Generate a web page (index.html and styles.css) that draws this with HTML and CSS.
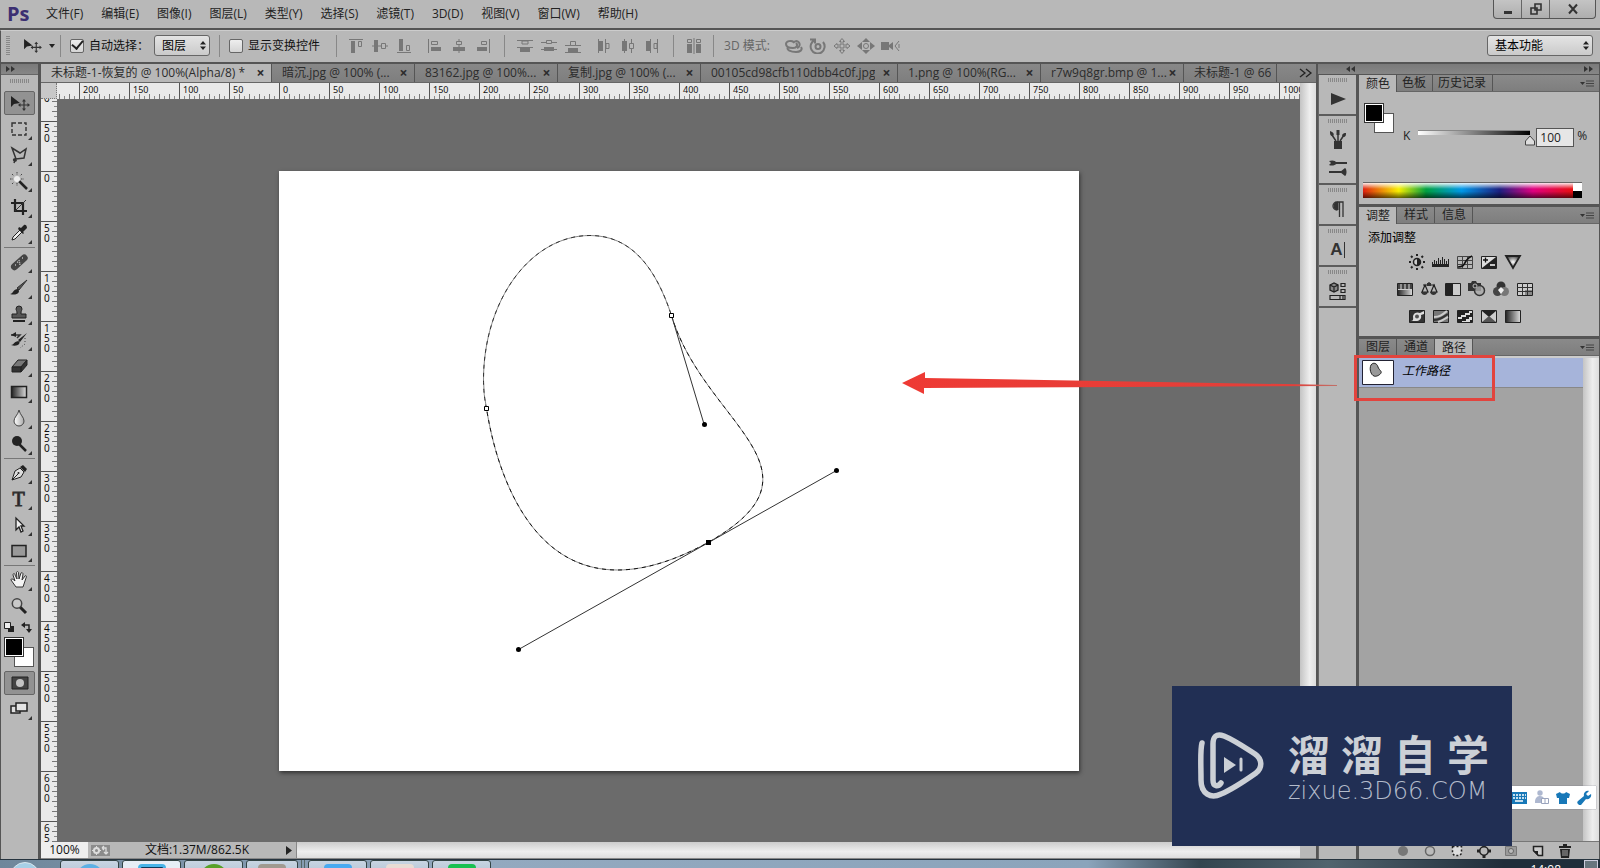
FILE: index.html
```html
<!DOCTYPE html>
<html lang="zh-CN">
<head>
<meta charset="utf-8">
<title>未标题-1-恢复的 @ 100%(Alpha/8)</title>
<link rel="stylesheet" href="styles.css">
</head>
<body>
<svg class="defs" aria-hidden="true">
  <defs>
    <linearGradient id="gDark" x1="0" x2="1"><stop offset="0" stop-color="#222"/><stop offset="1" stop-color="#ddd"/></linearGradient>
    <linearGradient id="gDrop" x1="0" x2="1"><stop offset="0" stop-color="#fff"/><stop offset="1" stop-color="#aaa"/></linearGradient>
    <linearGradient id="gDiag" x1="0" y1="0" x2="1" y2="1"><stop offset="0" stop-color="#222"/><stop offset=".4" stop-color="#ccc"/><stop offset=".6" stop-color="#333"/><stop offset="1" stop-color="#ddd"/></linearGradient>
    <radialGradient id="gVib"><stop offset="0" stop-color="#fff"/><stop offset="1" stop-color="#555"/></radialGradient>
    <linearGradient id="gArrow" x1="0" x2="1"><stop offset="0" stop-color="#ee3a34"/><stop offset=".9" stop-color="#e2403a"/><stop offset="1" stop-color="#c07068"/></linearGradient>
    <symbol id="i-move" viewBox="0 0 20 16"><path d="M1 1v11l3-3 6-1z" fill="#222"/><path d="M14 5v10M9 10h10" stroke="#333" stroke-width="1.2"/><path d="M12 6.500l2-2.500 2 2.500zM12 13.500l2 2.500 2-2.500zM10.500 8L8 10l2.500 2zM17.500 8l2.500 2-2.500 2z" fill="#333"/></symbol>
    <symbol id="i-menu" viewBox="0 0 14 8"><path d="M0 2h5L2.500 5z" fill="#333"/><path d="M6 1h8M6 3.500h8M6 6h8" stroke="#444"/></symbol>
    <symbol id="i-updown" viewBox="0 0 6 9"><path d="M0 3.500L3 0l3 3.500zM0 5.500L3 9l3-3.500z" fill="#222"/></symbol>
  </defs>
</svg>

<header class="menubar">
  <div class="logo">Ps</div>
  <nav class="menus">
    <button>文件(F)</button><button>编辑(E)</button><button>图像(I)</button><button>图层(L)</button><button>类型(Y)</button><button>选择(S)</button><button>滤镜(T)</button><button>3D(D)</button><button>视图(V)</button><button>窗口(W)</button><button>帮助(H)</button>
  </nav>
  <div class="winbtns">
    <button aria-label="最小化"><svg width="10" height="12"><path d="M1 8h8v3H1z" fill="#333"/></svg></button>
    <button aria-label="还原"><svg width="12" height="12"><path d="M5 1h6v6H5zM1 5h6v6H1z" fill="#b8b8b8" stroke="#333" stroke-width="1.600"/></svg></button>
    <button aria-label="关闭" class="win-close"><svg width="12" height="12"><path d="M2 1.500l8 9M10 1.500l-8 9" stroke="#333" stroke-width="2"/></svg></button>
  </div>
</header>

<section class="options">
  <span class="vgrip"></span>
  <svg class="opt-move" width="19" height="15"><use href="#i-move"/></svg>
  <svg class="opt-caret" width="6" height="4"><path d="M0 0h6L3 4z" fill="#222"/></svg>
  <i class="sep"></i>
  <label class="check"><input type="checkbox" checked><span>自动选择：</span></label>
  <span class="selectbox sel-layer"><select aria-label="自动选择"><option>图层</option></select><svg width="6" height="9"><use href="#i-updown"/></svg></span>
  <i class="sep"></i>
  <label class="check"><input type="checkbox"><span>显示变换控件</span></label>
  <i class="sep sep-far"></i>
  <div class="icons3">
    <svg width="16" height="14" class="al"><path d="M1 .500h14"/><path class="f" d="M3 2h4v12H3z"/><path d="M10.500 2.500h3v5h-3z"/></svg>
    <svg width="16" height="14" class="al"><path d="M0 7h16"/><path class="f" d="M2 1h4v12H2z"/><path class="o" d="M9.500 4.500h4v5h-4z"/></svg>
    <svg width="16" height="14" class="al"><path d="M1 13.500h14"/><path class="f" d="M3 0h4v12H3z"/><path d="M10.500 6.500h3v5h-3z"/></svg>
  </div>
  <div class="icons3">
    <svg width="16" height="14" class="al"><path d="M1.500 0v14"/><path class="f" d="M4 8h10v4H4z"/><path d="M4.500 2.500h6v3h-6z"/></svg>
    <svg width="16" height="14" class="al"><path d="M8 0v14"/><path class="f" d="M2 8h12v4H2z"/><path class="o" d="M5.500 2.500h5v3h-5z"/></svg>
    <svg width="16" height="14" class="al"><path d="M14.500 0v14"/><path class="f" d="M2 8h10v4H2z"/><path d="M6.500 2.500h5v3h-5z"/></svg>
  </div>
  <i class="sep"></i>
  <div class="icons3">
    <svg width="16" height="14" class="al"><path d="M0 1.500h16M0 8.500h16"/><path class="o" d="M5 2h6v3H5z"/><path class="f" d="M3 9h10v4H3z"/></svg>
    <svg width="16" height="14" class="al"><path d="M0 3.500h16M0 10.500h16"/><path class="o" d="M5.500 1.500h5v3h-5z"/><path class="f" d="M3 8h10v4H3z"/></svg>
    <svg width="16" height="14" class="al"><path d="M0 6.500h16M0 13.500h16"/><path class="o" d="M5.500 2.500h5v4h-5z"/><path class="f" d="M3 9h10v4H3z"/></svg>
  </div>
  <div class="icons3">
    <svg width="16" height="14" class="al"><path d="M2.500 0v14M9.500 0v14"/><path class="f" d="M3 2h4v10H3z"/><path d="M10 4.500h3v5h-3z"/></svg>
    <svg width="16" height="14" class="al"><path d="M4.500 0v14M11.500 0v14"/><path class="f" d="M2 2h5v10H2z"/><path class="o" d="M9.500 4.500h4v5h-4z"/></svg>
    <svg width="16" height="14" class="al"><path d="M6.500 0v14M13.500 0v14"/><path class="f" d="M2 2h4v10H2z"/><path d="M10 4.500h3v5h-3z"/></svg>
  </div>
  <i class="sep"></i>
  <svg width="16" height="16" class="al"><path d="M8 0v16"/><path d="M1.500 1.500h4v3h-4zM10.500 1.500h4v3h-4z"/><path class="f" d="M1 6h5v9H1zM10 6h5v9h-5z"/></svg>
  <i class="sep"></i>
  <span class="mode3d">3D 模式:</span>
  <div class="icons5">
    <svg width="18" height="16" class="al w"><path d="M8 5a3.500 3.500 0 1 1 4 5M9 4C6 2 1 3 1 6s4 4 7 4c4 0 5-3 3-5M3 9c-2 3 3 5 8 5 4 0 7-2 5-5"/></svg>
    <svg width="18" height="16" class="al w"><circle cx="9" cy="8.500" r="2.500"/><path d="M6 2a7 7 0 1 0 8 2M1 1.500h5v4"/></svg>
    <svg width="18" height="16" class="al"><path class="o" d="M9 .500l2.500 3H10V7h4V5.500L17 8l-3 2.500V9h-4v3.500h1.500L9 15.500l-2.500-3H8V9H4v1.500L1 8l3-2.500V7h4V3.500H6.500z"/></svg>
    <svg width="18" height="16" class="al"><circle cx="9" cy="8" r="2.500"/><path class="f" d="M9 0l4 4H5zM9 16l4-4H5zM0 8l5-4v8zM18 8l-5-4v8z"/></svg>
    <svg width="20" height="16" class="al"><path class="f" d="M0 4h8v8H0zM8 7l4-3v8L8 9z"/><path d="M18 3l-4 5 4 5M18 6v4"/></svg>
  </div>
  <span class="selectbox sel-work"><select aria-label="工作区"><option>基本功能</option></select><svg width="6" height="9"><use href="#i-updown"/></svg></span>
</section>

<main class="workspace">
  <aside class="toolbox">
    <div class="stripe"><svg width="9" height="6"><path d="M0 0l4 3-4 3zM5 0l4 3-4 3z" fill="#333"/></svg></div>
    <span class="hgrip"></span>
    <div class="tools">
      <button class="tool on" aria-label="移动工具"><svg width="20" height="16"><use href="#i-move"/></svg></button>
      <button class="tool sub" aria-label="矩形选框"><svg width="18" height="18"><path d="M2 3h14v12H2z" fill="none" stroke="#333" stroke-width="1.400" stroke-dasharray="4 2"/></svg></button>
      <button class="tool sub" aria-label="套索"><svg width="18" height="18"><path d="M2 2l8 5 6-4-2 9-8 1zM6 13c-3-1-3 2-1 2 2 0 1-2 0-1l-1 3" fill="none" stroke="#333" stroke-width="1.500"/></svg></button>
      <button class="tool sub" aria-label="魔棒"><svg width="18" height="18"><path d="M9 9l8 8" stroke="#222" stroke-width="2.500"/><circle cx="7" cy="7" r="3" fill="#eee"/><path d="M7 0v3M7 11v3M0 7h3M11 7h3M2 2l2 2M12 2l-2 2M2 12l2-2" stroke="#444" stroke-dasharray="1.500 1"/></svg></button>
      <button class="tool sub" aria-label="裁剪"><svg width="18" height="18"><path d="M5 1v12h12M1 5h12v12" fill="none" stroke="#222" stroke-width="2.200"/><path d="M5 13L16 2" stroke="#333"/></svg></button>
      <button class="tool sub" aria-label="吸管"><svg width="18" height="18"><path d="M2 16l1-3 7-7 2 2-7 7z" fill="#eee" stroke="#222"/><path d="M8 5l5 5 1-1-1-1 4-4c0-3-2-4-3-3l-3 3-2-1z" fill="#222"/></svg></button>
      <hr>
      <button class="tool sub" aria-label="修复画笔"><svg width="18" height="18"><rect x="-1" y="6" width="20" height="7" rx="3.500" transform="rotate(-42 9 9)" fill="#444"/><path d="M7 9l4 1M9 7l1 5M5 12h1M12 5h1" stroke="#bbb" stroke-width="1.500" stroke-dasharray="1 1"/></svg></button>
      <button class="tool sub" aria-label="画笔"><svg width="18" height="18"><path d="M17 1L9 11 7 9z" fill="#555" stroke="#333"/><path d="M8 10c3 3-1 7-8 5 3 0 3-5 8-5z" fill="#222"/></svg></button>
      <button class="tool sub" aria-label="仿制图章"><svg width="18" height="18"><path d="M7 8c0-2-1-3-1-4a3 3 0 0 1 6 0c0 1-1 2-1 4v1h5v4H2V9h5z" fill="#555" stroke="#222"/><path d="M3 16h12" stroke="#222" stroke-width="2"/></svg></button>
      <button class="tool sub" aria-label="历史记录画笔"><svg width="18" height="18"><path d="M1 4h9l-3 3" fill="none" stroke="#333" stroke-width="1.500"/><path d="M1 4l5-3v5z" fill="#222"/><path d="M17 2l-7 9-2-2zM9 10c2 3-2 6-8 4 3 0 3-4 8-4z" fill="#222"/><path d="M15 7v6l-5 4" fill="none" stroke="#444" stroke-dasharray="1 2"/></svg></button>
      <button class="tool sub" aria-label="橡皮擦"><svg width="18" height="18"><path d="M8 3h9l-6 7H2z" fill="#777" stroke="#222"/><path d="M2 10h9v5H2zM11 10l6-7v5l-6 7z" fill="#333" stroke="#222"/></svg></button>
      <button class="tool sub" aria-label="渐变"><svg width="18" height="18"><path d="M1.500 3.500h15v11h-15z" fill="url(#gDark)" stroke="#222" stroke-width="1.500"/></svg></button>
      <button class="tool sub" aria-label="模糊"><svg width="18" height="18"><path d="M9 1c1 5 5 7 5 11a5 5 0 0 1-10 0c0-4 4-6 5-11z" fill="url(#gDrop)" stroke="#444"/></svg></button>
      <button class="tool sub" aria-label="减淡"><svg width="18" height="18"><circle cx="7" cy="6" r="5" fill="#222"/><path d="M9 9l7 7" stroke="#222" stroke-width="2.500"/></svg></button>
      <hr>
      <button class="tool sub" aria-label="钢笔"><svg width="18" height="18"><path d="M2 16l3-9 5-3 4 4-3 5z" fill="#ddd" stroke="#222"/><path d="M10 3l3-2 4 4-2 3z" fill="#222"/><path d="M2 16l6-6" stroke="#222"/><circle cx="8.500" cy="9" r="1" fill="#222"/></svg></button>
      <button class="tool sub glyph" aria-label="文字工具">T</button>
      <button class="tool sub" aria-label="直接选择"><svg width="18" height="18"><path d="M6 2v12l3-3 2 5 2-1-2-5h3z" fill="#eee" stroke="#222" stroke-width="1.300"/></svg></button>
      <button class="tool sub" aria-label="矩形"><svg width="18" height="18"><path d="M2 3.500h14v11H2z" fill="#999" stroke="#222" stroke-width="1.500"/></svg></button>
      <hr>
      <button class="tool sub" aria-label="抓手"><svg width="18" height="18"><path d="M6 16L1 9c0-2 2-1 4 1L3 4c0-2 2-2 2 0l2 4-.500-6c0-2 2-2 2 0L9 8l2-6c1-1 2 0 2 1l-1 6 3-4c1-1 2 0 1 2l-3 9z" fill="#f4f4f4" stroke="#333"/></svg></button>
      <button class="tool" aria-label="缩放"><svg width="18" height="18"><path d="M10 10l6 6" stroke="#222" stroke-width="3"/><circle cx="7" cy="6.500" r="4.700" fill="#c9c9c9" stroke="#444" stroke-width="1.500"/></svg></button>
    </div>
    <div class="miniswap">
      <svg width="11" height="11"><path d="M4 4h6v6H4z" fill="#222"/><path d="M.500.500h6v6h-6z" fill="#eee" stroke="#222"/></svg>
      <svg width="11" height="11"><path d="M2 3h6v6" fill="none" stroke="#222" stroke-width="1.500"/><path d="M0 3l4-3v6zM5 7h6l-3 4z" fill="#222"/></svg>
    </div>
    <div class="swatch"><i class="bg"></i><i class="fg"></i></div>
    <div class="tools">
      <button class="tool on" aria-label="快速蒙版"><svg width="18" height="14"><path d="M1 1h16v12H1z" fill="#444" stroke="#222"/><circle cx="9" cy="7" r="4" fill="#c4c4c4"/></svg></button>
      <button class="tool sub" aria-label="屏幕模式"><svg width="18" height="14"><path d="M1 4h9v7H1z" fill="#ddd" stroke="#222" stroke-width="1.500"/><path d="M6 1h11v8H6z" fill="#e4e4e4" stroke="#222" stroke-width="1.500"/></svg></button>
    </div>
  </aside>

  <section class="docs">
    <div class="tabs">
      <div class="tab active"><span>未标题-1-恢复的 @ 100%(Alpha/8) *</span><button aria-label="关闭">×</button></div>
      <div class="tab"><span>暗沉.jpg @ 100% (...</span><button aria-label="关闭">×</button></div>
      <div class="tab"><span>83162.jpg @ 100%...</span><button aria-label="关闭">×</button></div>
      <div class="tab"><span>复制.jpg @ 100% (...</span><button aria-label="关闭">×</button></div>
      <div class="tab wide"><span>00105cd98cfb110dbb4c0f.jpg</span><button aria-label="关闭">×</button></div>
      <div class="tab"><span>1.png @ 100%(RG...</span><button aria-label="关闭">×</button></div>
      <div class="tab"><span>r7w9q8gr.bmp @ 1...</span><button aria-label="关闭">×</button></div>
      <div class="tab last"><span>未标题-1 @ 66</span></div>
      <button class="more" aria-label="更多"><svg width="14" height="10"><path d="M1 1l5 4-5 4M7 1l5 4-5 4" fill="none" stroke="#222" stroke-width="1.300"/></svg></button>
    </div>
    <div class="docbody">
      <div class="frame">
        <div class="hrow"><i class="corner"></i><div class="hruler"><span>200</span><span>150</span><span>100</span><span>50</span><span>0</span><span>50</span><span>100</span><span>150</span><span>200</span><span>250</span><span>300</span><span>350</span><span>400</span><span>450</span><span>500</span><span>550</span><span>600</span><span>650</span><span>700</span><span>750</span><span>800</span><span>850</span><span>900</span><span>950</span><span>1000</span></div></div>
        <div class="vrow">
          <div class="vruler"><div class="vlabels"><span>100</span><span>50</span><span>0</span><span>50</span><span>100</span><span>150</span><span>200</span><span>250</span><span>300</span><span>350</span><span>400</span><span>450</span><span>500</span><span>550</span><span>600</span><span>650</span></div></div>
          <div class="stage">
            <svg class="paper" width="800" height="600" viewBox="0 0 800 600" role="img" aria-label="工作路径">
              <path d="M392.500 144.500C425 253 557 299 429 371.500C239 476 210 250 207.500 237.500Q204.500 224 204.500 209C204.500 129 252 64.500 311 64.500C351 64.500 376 94.500 392.500 144.500Z" fill="none" stroke="#888"/>
              <path d="M392.500 144.500C425 253 557 299 429 371.500C239 476 210 250 207.500 237.500" fill="none" stroke="#111" stroke-dasharray="4 4"/>
              <path d="M207.500 237.500Q204.500 224 204.500 209C204.500 129 252 64.500 311 64.500C351 64.500 376 94.500 392.500 144.500" fill="none" stroke="#333" stroke-dasharray="4 4"/>
              <path d="M392.500 144.500L425 253M239.500 478.500L557.500 299.500" stroke="#333" fill="none"/>
              <g fill="#000"><circle cx="425.500" cy="253.500" r="2.500"/><circle cx="557.500" cy="299.500" r="2.500"/><circle cx="239.500" cy="478.500" r="2.500"/><path d="M427 369h5v5h-5z"/></g>
              <g fill="#fff" stroke="#000"><path d="M390.500 142.500h4v4h-4zM205.500 235.500h4v4h-4z"/></g>
            </svg>
          </div>
        </div>
      </div>
      <div class="vscroll"></div>
    </div>
    <footer class="status">
      <input class="zoomlevel" aria-label="缩放比例" value="100%">
      <svg class="gears" width="19" height="11"><path d="M0 0h19v11H0z" fill="#8b8b8b"/><circle cx="5.500" cy="5.500" r="2.500" fill="none" stroke="#ddd" stroke-width="2"/><path d="M5.500 1v9M1 5.500h9" stroke="#ddd" stroke-dasharray="2 5"/><path d="M11 3h4v5M11 3l2-2M11 3l2 2M15 9l2-2M15 9l-2-2" fill="none" stroke="#ddd" stroke-width="1.300"/></svg>
      <span class="docsize">文档:1.37M/862.5K</span>
      <button aria-label="菜单"><svg width="6" height="9"><path d="M0 0l6 4.500L0 9z" fill="#222"/></svg></button>
      <i class="hscroll"></i><i class="grow"></i>
    </footer>
  </section>

  <section class="right">
    <div class="stripe wide-stripe"><svg width="9" height="6"><path d="M4 0L0 3l4 3zM9 0L5 3l4 3z" fill="#333"/></svg><svg width="9" height="6"><path d="M0 0l4 3-4 3zM5 0l4 3-4 3z" fill="#333"/></svg></div>
    <div class="rightcols">
      <div class="dock">
        <div class="dgroup"><span class="hgrip"></span><button aria-label="动作"><svg width="20" height="16"><path d="M3 2l15 6-15 6z" fill="#333"/></svg></button></div>
        <div class="dgroup"><span class="hgrip"></span><button aria-label="画笔"><svg width="20" height="20"><path d="M6 11h8v8H6z" fill="#333"/><path d="M8 11L4 5M10 11V3M12 11l4-6" stroke="#333" stroke-width="1.500"/><path d="M2 1c3 1 5 3 3 5-3 0-3-2-3-5zM8.500 0h3v5h-3zM18 3c-3 0-5 2-3 4 3 0 3-2 3-4z" fill="#333"/></svg></button><button aria-label="画笔预设"><svg width="20" height="18"><path d="M8 4h11M1 13h12" stroke="#333" stroke-width="2"/><path d="M1 2c3-1 6-1 8 2-2 3-6 3-8 2l2-2zM12 13l5-4c2 1 2 7 0 8z" fill="#333"/></svg></button></div>
        <div class="dgroup"><span class="hgrip"></span><button aria-label="段落"><svg width="20" height="18"><path d="M9 10a4 4 0 0 1 0-8h6v15M11.500 2v15" fill="none" stroke="#333" stroke-width="1.300"/><path d="M10 2v8a4 4 0 0 1 0-8z" fill="#333" stroke="#333"/></svg></button></div>
        <div class="dgroup"><span class="hgrip"></span><button aria-label="字符" class="charbtn">A<i></i></button></div>
        <div class="dgroup"><span class="hgrip"></span><button aria-label="3D"><svg width="20" height="20"><path d="M2 4l4-2 4 2v5l-4 2-4-2z" fill="#888" stroke="#222" stroke-width="1.300"/><path d="M2 4l4 2 4-2M6 6v5M13 2.500h4v3h-4zM13 8.500h4v3h-4zM2 14.500h15v4H2zM12 14.500v4M15 14.500v4" fill="none" stroke="#222" stroke-width="1.200"/></svg></button></div>
      </div>
      <div class="panels">
        <div class="ptabs tight"><button class="cur">颜色</button><button>色板</button><button>历史记录</button><svg width="14" height="8"><use href="#i-menu"/></svg></div>
        <div class="pbody color">
          <div class="crow">
            <div class="swatch"><i class="bg"></i><i class="fg"></i></div>
            <label for="kval">K</label>
            <div class="slider"><i></i><svg width="12" height="11"><path d="M6 1l4.500 5v4h-9V6z" fill="#ddd" stroke="#444"/></svg></div>
            <input id="kval" value="100"><span>%</span>
          </div>
          <div class="spectrum"><i class="hues"></i><i class="bw"></i></div>
        </div>
        <div class="ptabs"><button class="cur">调整</button><button>样式</button><button>信息</button><svg width="14" height="8"><use href="#i-menu"/></svg></div>
        <div class="pbody adjust">
          <div class="adjtitle">添加调整</div>
          <div class="arow">
            <svg width="18" height="16"><circle cx="9" cy="8" r="3.500" fill="#ccc" stroke="#222" stroke-width="1.500"/><path d="M9 4.500a3.500 3.500 0 0 1 0 7z" fill="#222"/><path d="M9 0v2M9 14v2M1 8h2M15 8h2M3 2l1.500 1.500M15 2l-1.500 1.500M3 14l1.500-1.500M15 14l-1.500-1.500" stroke="#222" stroke-width="2"/></svg>
            <svg width="18" height="16"><path d="M0 13V8h1v2h1V6h1v4h1V7h1v3h1V4h1v6h1V6h1v4h1V3h1v7h1V5h1v5h1V7h1v3h1V5h1v8z" fill="#222"/></svg>
            <svg width="18" height="16"><path d="M1.500 2.500h15v12h-15zM6.500 2v12M11.500 2v12M1 6.500h15M1 10.500h15" fill="none" stroke="#444"/><path d="M2 13c6 0 6-3 8-6s3-4 6-5" fill="none" stroke="#111" stroke-width="1.700"/></svg>
            <svg width="18" height="16"><path d="M1.500 2.500h15v12h-15z" fill="#ddd" stroke="#222"/><path d="M16 3v11H2z" fill="#222"/><path d="M3 6h5M5.500 3.500v5" stroke="#111" stroke-width="1.300"/><path d="M10 11h5" stroke="#fff" stroke-width="1.500"/></svg>
            <svg width="18" height="16"><path d="M2 2h14L9 14z" fill="url(#gVib)" stroke="#222" stroke-width="1.800"/></svg>
          </div>
          <div class="arow">
            <svg width="18" height="16"><path d="M1.500 2.500h15v12h-15z" fill="url(#gDark)" stroke="#222"/><path d="M2 3h14v5H2z" fill="#444"/><path d="M5 3v5M9 3v5M13 3v5" stroke="#aaa" stroke-width="1.500"/><path d="M2 8.500h14" stroke="#ccc"/></svg>
            <svg width="18" height="16"><path d="M9 1v3M3 4h12M5 4l-3 7h6zM14 4l-3 7h6z" fill="none" stroke="#222" stroke-width="1.200"/><path d="M1 11h7c-1 4-6 4-7 0zM10 11h7c-1 4-6 4-7 0zM7 2h4v3H7z" fill="#333"/></svg>
            <svg width="18" height="16"><path d="M1.500 2.500h15v12h-15z" fill="#ccc" stroke="#222"/><path d="M2 3h7v11H2z" fill="#222"/></svg>
            <svg width="18" height="16"><path d="M0 2h3l1-2h4l1 2h4v8H0z" fill="#333"/><circle cx="11.500" cy="9.500" r="5" fill="#aaa" fill-opacity=".8" stroke="#333" stroke-width="1.500"/><circle cx="7" cy="5" r="2" fill="none" stroke="#bbb"/></svg>
            <svg width="18" height="16"><circle cx="9" cy="5" r="4.500" fill="#333"/><circle cx="5.500" cy="10.500" r="4.500" fill="#444"/><circle cx="12.500" cy="10.500" r="4.500" fill="#777"/><path d="M9 6l3 3-3 4-3-4z" fill="#eee"/></svg>
            <svg width="18" height="16"><path d="M1.500 2.500h15v12h-15z" fill="#ccc" stroke="#222"/><path d="M9 9h7v5H9z" fill="#888"/><path d="M6.500 2v12M11.500 2v12M1 6.500h15M1 10.500h15" stroke="#333"/></svg>
          </div>
          <div class="arow">
            <svg width="18" height="16"><path d="M1.500 2.500h15v12h-15z" fill="#333" stroke="#222"/><path d="M3 13c3 0 2-3 2-5 1-4 5-4 7-3l4-2v3l-3 1c1 4-2 6-5 6z" fill="#ddd"/><circle cx="9" cy="8.500" r="2" fill="#555"/></svg>
            <svg width="18" height="16"><path d="M1.500 2.500h15v12h-15z" fill="#777" stroke="#222"/><path d="M2 9c6 0 8-2 13-6M6 14c4-1 6-3 10-5" fill="none" stroke="#ccc" stroke-width="2"/><path d="M2 12c6 0 9-3 14-6" fill="none" stroke="#333" stroke-width="2"/></svg>
            <svg width="18" height="16"><path d="M1.500 2.500h15v12h-15z" fill="#222" stroke="#222"/><path d="M2 9h3V7h4V5h4V3h3v2h-2v2h-4v2H6v2H2zM6 14v-1h4v-2h3V9h3v3h-2v2z" fill="#ddd"/></svg>
            <svg width="18" height="16"><path d="M1.500 2.500h15v12h-15z" fill="#ccc" stroke="#222"/><path d="M2 3h14L9 9z" fill="#222"/><path d="M2 14h14L9 8z" fill="#555"/></svg>
            <svg width="18" height="16"><path d="M1.500 2.500h15v12h-15z" fill="url(#gDark)" stroke="#222"/></svg>
          </div>
        </div>
        <div class="ptabs"><button>图层</button><button>通道</button><button class="cur">路径</button><svg width="14" height="8"><use href="#i-menu"/></svg></div>
        <div class="paths">
          <div class="plist">
            <div class="prow"><svg class="thumb" width="32" height="25"><path d="M.500.500h31v24H.500z" fill="#fff" stroke="#223"/><path d="M9 5c2-3 6-2 7 2 1 3 4 4 3 6-1 2-5 4-7 3-3-1-5-7-3-11z" fill="#999" stroke="#222"/></svg><span>工作路径</span></div>
          </div>
          <div class="vscroll"></div>
        </div>
        <div class="pfoot">
          <button aria-label="填充"><svg width="14" height="14"><circle cx="7" cy="7" r="5" fill="#777"/></svg></button>
          <button aria-label="描边"><svg width="14" height="14"><circle cx="7" cy="7" r="4.500" fill="#bbb" stroke="#666" stroke-width="1.500"/></svg></button>
          <button aria-label="选区"><svg width="14" height="14"><path d="M2.500 2.500h9v7l-2 2h-5l-2-2z" fill="#ddd" stroke="#222" stroke-width="1.500" stroke-dasharray="2 2"/></svg></button>
          <button aria-label="路径"><svg width="14" height="14"><circle cx="7" cy="7" r="4.200" fill="none" stroke="#222" stroke-width="1.500"/><path d="M5.500 0h3v3h-3zM5.500 11h3v3h-3zM0 5.500h3v3H0zM11 5.500h3v3h-3z" fill="#222"/></svg></button>
          <button aria-label="蒙版"><svg width="14" height="14"><path d="M1.500 2.500h11v9h-11z" fill="#999" stroke="#777"/><circle cx="7" cy="7" r="2.500" fill="#bbb" stroke="#666"/></svg></button>
          <button aria-label="新建"><svg width="14" height="14"><path d="M2.500 2.500h9v9h-4l-5-5z" fill="#ccc" stroke="#222" stroke-width="1.500"/><path d="M2 7h5v5z" fill="#222"/></svg></button>
          <button aria-label="删除"><svg width="14" height="14"><path d="M2 5h10l-1 9H3zM1 2h12v2H1zM5 0h4v2H5z" fill="#222"/><path d="M5 6v6M7 6v6M9 6v6" stroke="#aaa"/></svg></button>
        </div>
      </div>
    </div>
  </section>
</main>

<footer class="taskbar">
  <i class="orb"></i>
  <button aria-label="应用"><i class="c1"></i></button><button class="lit" aria-label="应用"><i class="c2"></i></button><button aria-label="应用"><i class="c3"></i></button><button class="short" aria-label="应用"><i class="c4"></i></button>
  <span class="split"></span>
  <button aria-label="应用"><i class="c5"></i></button><button aria-label="应用"><i class="c6"></i></button><button aria-label="应用"><i class="c7"></i></button>
  <span class="clock">14:08</span><i class="showdesk"></i>
</footer>

<svg class="arrow" width="436" height="22" aria-hidden="true"><path d="M0 11L23 0v6l412 7v1L22 16v6z" fill="url(#gArrow)"/></svg>
<div class="redbox"></div>

<div class="ime">
  <svg width="16" height="12"><path d="M0 0h16v12H0z" fill="#1878b8"/><path d="M2 3h13M2 6h13" stroke="#fff" stroke-width="1.500" stroke-dasharray="2 1"/><path d="M4 9h8" stroke="#fff" stroke-width="1.500"/></svg>
  <svg width="16" height="15"><circle cx="6" cy="3" r="2.700" fill="#aeb8d0"/><path d="M1 12c0-5 3-6 5-6s4 1 4 3v4H1z" fill="#aeb8d0"/><path d="M7.500 8.500h7v5h-7zM11 8v6" fill="#fff" stroke="#9aa4bd"/></svg>
  <svg width="14" height="14"><path d="M4 1c1 2 5 2 6 0l4 2-1 4h-2v6H3V7H1L0 3z" fill="#1878b8"/></svg>
  <svg width="15" height="15"><path d="M1 14c-1-1-1-2 0-3l6-5c-1-3 2-6 5-5l-3 3 2 2 3-2c1 3-2 6-5 5l-5 6c-1 1-2 0-3-1z" fill="#1878b8"/></svg>
</div>

<div class="brand">
  <svg width="66" height="68" viewBox="0 0 66 68"><g fill="none" stroke="#ccd0d6" stroke-linecap="round"><path d="M4 11C2 18 3 32 3 48c0 14 10 19 20 14 10-4 25-14 35-21 7-6 6-14-1-19C46 15 36 8 26 4 18 1 15 5 15 12v36c0 7 5 7 8 3" stroke-width="5.500"/><path d="M43 27v11" stroke-width="3"/></g><path d="M26 25l12 8-12 8z" fill="#ccd0d6"/></svg>
  <div class="brandtext"><div class="cn"><span>溜</span><span>溜</span><span>自</span><span>学</span></div><div class="en">zixue.3D66.COM</div></div>
</div>
</body>
</html>
```

FILE: styles.css
```css
* { box-sizing: border-box; }
html, body { height: 100%; }
body {
  margin: 0;
  display: flex;
  flex-direction: column;
  overflow: hidden;
  position: relative;
  background: #b8b8b8;
  color: #222;
  font: 12px/16px "Open Sans", "Noto Sans CJK SC", sans-serif;
}
button, input, select { font: inherit; color: inherit; margin: 0; }
button { border: 0; padding: 0; background: none; display: flex; align-items: center; justify-content: center; }
svg { display: block; flex: none; }
i { display: block; font-style: normal; }
.defs { position: absolute; width: 0; height: 0; }

/* menu bar */
.menubar { flex: none; height: 30px; display: flex; align-items: center; border-bottom: 2px solid #555; padding: 0 4px 0 7px; }
.logo { width: 39px; color: #3b2f72; font: bold 20px/26px "Open Sans", sans-serif; }
.menus { display: flex; gap: 18px; flex: 1; }
.winbtns { align-self: flex-start; display: flex; height: 19px; border: 1px solid #555; border-top: 0; border-radius: 0 0 4px 4px; background: linear-gradient(#c4c4c4, #aeaeae); }
.winbtns button { width: 28px; border-right: 1px solid #666; }
.winbtns .win-close { width: 45px; border-right: 0; }

/* options bar */
.options { flex: none; height: 34px; display: flex; align-items: center; padding: 0 7px 2px 5px; border-bottom: 2px solid #555; border-top: 1px solid #ccc; border-left: 1px solid #555; }
.vgrip { width: 4px; height: 20px; background: repeating-linear-gradient(#888 0 1px, transparent 1px 2px); }
.opt-move { margin-left: 13px; }
.opt-caret { margin: 0 5px 0 7px; }
.sep { width: 1px; height: 22px; background: #888; flex: none; margin: 0 9px 0 0; }
.check { display: flex; align-items: center; gap: 5px; color: #111; white-space: nowrap; }
.check input {
  appearance: none; width: 14px; height: 14px; border: 1px solid #666; border-radius: 2px;
  background: linear-gradient(#eee, #d4d4d4); display: grid; place-items: center;
}
.check input:checked::after { content: ""; width: 5px; height: 9px; border: solid #222; border-width: 0 2px 2px 0; transform: rotate(40deg); margin-top: -4px; }
.selectbox { position: relative; display: block; height: 21px; }
.selectbox select { appearance: none; width: 100%; height: 100%; padding: 0 7px; border: 1px solid #666; border-radius: 3px; background: linear-gradient(#e4e4e4, #cacaca); color: #000; line-height: 16px; }
.selectbox svg { position: absolute; right: 4px; top: 6px; }
.sel-layer { width: 56px; margin: 0 9px 0 5px; }
.sel-work { width: 106px; margin-left: auto; }
.sep-far { margin: 0 11px 0 16px; }
.icons3 { display: flex; gap: 8px; margin-right: 15px; }
.icons3 + .sep { margin: 0 12px 0 -2px; }
.al { fill: none; stroke: #777; }
.al .f { fill: #777; stroke: none; }
.al .o { fill: #b8b8b8; }
.al.w { stroke-width: 2; }
.al + .sep { margin: 0 10px 0 11px; }
.mode3d { color: #666; margin-right: 15px; white-space: nowrap; }
.icons5 { display: flex; gap: 6px; }

/* workspace */
.workspace { flex: 1; min-height: 0; display: flex; background: #555; }
.stripe { flex: none; height: 11px; background: linear-gradient(#7a7a7a, #868686); padding: 0 5px; display: flex; align-items: center; justify-content: space-between; }
.hgrip { display: block; flex: none; width: 20px; height: 4px; background: repeating-linear-gradient(90deg, #888 0 1px, transparent 1px 2px); }

.toolbox { flex: none; width: 37px; margin: 0 3px 0 1px; background: #b8b8b8; display: flex; flex-direction: column; }
.toolbox .stripe { border-bottom: 1px solid #666; }
.toolbox .hgrip { margin: 4px 0 7px 9px; }
.tools { display: flex; flex-direction: column; padding: 0 3px; }
.tool { position: relative; height: 26px; padding-right: 2px; }
.tool.on { height: 24px; margin: 1px 0; background: #929292; border: 1px solid #666; border-radius: 2px; padding-right: 0; }
.tool.sub::after { content: ""; position: absolute; right: 3px; bottom: 2px; border: 2px solid #333; border-left-color: transparent; border-top-color: transparent; }
.glyph { font: 20px/24px "Liberation Serif", serif; color: #222; -webkit-text-stroke: 1px #333; }
.tools hr { margin: 1px 0; width: 100%; height: 1px; border: 0; background: #777; }
.miniswap { display: flex; justify-content: space-between; padding: 3px 6px 4px 3px; }
.swatch { display: grid; grid-template-columns: 10px 10px 10px; grid-template-rows: 10px 10px 10px; flex: none; }
.swatch .fg { grid-area: 1 / 1 / 3 / 3; background: #000; border: 1px solid #333; box-shadow: inset 0 0 0 1px #fff; }
.swatch .bg { grid-area: 2 / 2 / 4 / 4; background: #fff; border: 1px solid #555; }
.toolbox .swatch { margin: 0 3px 3px; }

/* documents */
.docs { flex: 1; min-width: 0; display: flex; flex-direction: column; }
.tabs { flex: none; height: 19px; display: flex; background: linear-gradient(#888, #7e7e7e); border-bottom: 1px solid #666; overflow: hidden; }
.tab { flex: none; width: 143px; display: flex; align-items: center; justify-content: space-between; padding: 0 5px 0 10px; border-right: 1px solid #555; color: #2c2c2c; white-space: nowrap; overflow: hidden; }
.tab span { overflow: hidden; }
.tab.active { width: 231px; background: #b8b8b8; }
.tab.wide { width: 197px; }
.tab.last { width: 93px; padding-right: 0; }
.tab button { font-size: 14px; line-height: 14px; font-weight: bold; width: 11px; }
.more { flex: 1; justify-content: flex-end; padding-right: 3px; }
.docbody { flex: 1; min-height: 0; display: flex; }
.frame { flex: 1; min-width: 0; display: flex; flex-direction: column; }
.hrow { flex: none; display: flex; height: 16px; }
.corner { flex: none; width: 16px; background: #c8c8c8; border: dotted #777; border-width: 0 1px 1px 0; }
.hruler {
  flex: 1; min-width: 0; overflow: hidden; display: flex; padding-left: 22px;
  font: 9px/11px "Noto Sans", sans-serif; color: #111;
  background:
    repeating-linear-gradient(90deg, #555 0 1px, transparent 1px 50px) 22px 0 / 100% 16px,
    repeating-linear-gradient(90deg, #777 0 1px, transparent 1px 10px) 2px 11px / 100% 5px,
    repeating-linear-gradient(90deg, #888 0 1px, transparent 1px 5px) 2px 13px / 100% 3px,
    #e9e9e9;
  background-repeat: no-repeat;
}
.hruler span { flex: none; width: 50px; padding: 1px 0 0 4px; }
.vrow { flex: 1; min-height: 0; display: flex; }
.vruler {
  flex: none; width: 16px; overflow: hidden; font: 10px/10px "Noto Sans", sans-serif; color: #111;
  background:
    repeating-linear-gradient(#555 0 1px, transparent 1px 50px) 0 22px / 16px 100%,
    repeating-linear-gradient(#777 0 1px, transparent 1px 10px) 11px 2px / 5px 100%,
    repeating-linear-gradient(#888 0 1px, transparent 1px 5px) 13px 2px / 3px 100%,
    #e9e9e9;
  background-repeat: no-repeat;
}
.vlabels { display: flex; flex-direction: column; margin-top: -28px; }
.vlabels span { flex: none; height: 50px; width: 10px; padding: 2px 0 0 3px; word-break: break-all; }
.stage { flex: 1; min-width: 0; background: #6b6b6b; display: flex; align-items: center; justify-content: center; overflow: hidden; }
.paper { background: #fff; box-shadow: 1px 2px 4px #333; }
.vscroll { flex: none; width: 16px; background: linear-gradient(90deg, #c4c4c4, #eee 60%, #ddd); }
.status { flex: none; height: 17px; display: flex; align-items: center; background: #b8b8b8; color: #111; border-bottom: 1px solid #888; }
.zoomlevel { width: 47px; height: 16px; border: 0; background: #eee; text-align: center; padding: 0; border-radius: 0; }
.gears { margin: 0 0 0 3px; }
.docsize { width: 139px; text-align: right; white-space: nowrap; }
.status button { width: 48px; height: 16px; border-right: 1px solid #888; padding-left: 32px; }
.hscroll { flex: 1; height: 16px; background: linear-gradient(#ccc, #eee 60%, #ddd); }
.grow { width: 16px; }

/* right side */
.right { flex: none; width: 282px; margin-left: 2px; display: flex; flex-direction: column; border-right: 1px solid #555; }
.wide-stripe { padding: 0 6px 0 28px; border-bottom: 1px solid #555; }
.rightcols { flex: 1; min-height: 0; display: flex; gap: 3px; }
.dock { flex: none; width: 38px; background: #b8b8b8; border-left: 1px solid #666; }
.dgroup { display: flex; flex-direction: column; align-items: center; border-bottom: 2px solid #5c5c5c; padding: 3px 0 1px; }
.dgroup .hgrip { margin-bottom: 3px; }
.dgroup button { height: 28px; }
.charbtn { font: bold 17px/20px "Liberation Sans", sans-serif; color: #333; }
.charbtn i { width: 1px; height: 16px; background: #333; margin-left: 1px; }
.panels { flex: 1; min-width: 0; display: flex; flex-direction: column; }
.ptabs { flex: none; height: 17px; display: flex; background: linear-gradient(#8a8a8a, #7e7e7e); border-bottom: 1px solid #666; padding-right: 5px; }
.ptabs button { padding: 0 6px 0 7px; border-right: 1px solid #555; color: #222; line-height: 16px; }
.ptabs.tight button:not(.cur) { padding: 0 6px 0 5px; }
.ptabs .cur { background: #b8b8b8; height: 17px; }
.ptabs svg { margin: 5px 0 0 auto; }
.pbody { flex: none; background: #b8b8b8; margin-bottom: 3px; height: 112px; }
.crow { display: flex; padding: 11px 0 0 5px; height: 90px; align-items: flex-start; }
.crow label { margin: 25px 8px 0 9px; }
.slider { flex: none; width: 118px; padding-top: 27px; }
.slider i { width: 112px; height: 5px; border-top: 1px solid #888; background: linear-gradient(90deg, #fff, #000); }
.slider svg { margin-left: 106px; }
.crow input { width: 38px; height: 19px; margin: 25px 3px 0 0; border: 1px solid #555; background: #e6e6e6; padding: 0 3px; border-radius: 0; }
.crow > span { margin-top: 25px; }
.spectrum { display: flex; height: 16px; margin: 0 17px 0 4px; border-top: 1px solid #666; }
.hues { flex: 1; background: linear-gradient(rgba(255,255,255,.9), rgba(255,255,255,0) 40%, rgba(0,0,0,0) 55%, rgba(0,0,0,.6)), linear-gradient(90deg, #e02010, #f8f000 17%, #00a040 30%, #0098e8 47%, #1c2080 65%, #e00080 81%, #e81010); }
.bw { width: 9px; background: linear-gradient(#fff 50%, #000 50%); }
.adjtitle { padding: 6px 0 0 9px; color: #000; height: 29px; }
.arow { display: flex; justify-content: center; gap: 6px; height: 27px; padding: 1px 29px 0 0; }
.paths { flex: 1; min-height: 0; display: flex; border-top: 2px solid #ccc; }
.plist { flex: 1; background: #a3a3a3; }
.prow { display: flex; align-items: flex-start; gap: 8px; height: 30px; padding: 2px 3px; background: #a6b4da; border-bottom: 1px solid #888; color: #000; }
.prow span { font-style: italic; line-height: 21px; }
.pfoot { flex: none; height: 18px; display: flex; justify-content: flex-end; gap: 13px; padding-right: 27px; background: #b8b8b8; border-top: 1px solid #777; }

/* taskbar */
.taskbar { flex: none; height: 9px; overflow: hidden; display: flex; align-items: flex-start; gap: 3px; padding-left: 10px; border-top: 1px solid #26343f; background: linear-gradient(90deg, #6f879b, #93a9bf 30%, #8ba4bb 68%, #33454f 75%, #51646e 83%, #202d3a 94%); }
.orb { width: 30px; height: 30px; border-radius: 50%; background: #a7cfe6; border: 1px solid #d9e6ee; margin: 2px 17px 0 0; flex: none; }
.taskbar button { flex: none; width: 59px; height: 30px; align-items: flex-start; border: 1px solid #344; border-radius: 3px; background: linear-gradient(#c8d5e2, #9fb3c6); padding-top: 3px; }
.taskbar .lit { background: #e6eef6; }
.taskbar .short { width: 52px; }
.taskbar button i { width: 28px; height: 28px; border-radius: 4px; }
.c1 { background: #5cb0e4; border-radius: 14px !important; }
.c2 { background: #0b3a5b; border: 3px solid #48b4e8; }
.c3 { background: #58a028; border-radius: 14px !important; }
.c4 { background: #a09a90; }
.c5 { background: #48aaf0; }
.c6 { background: #e8dcd4; }
.c7 { background: #18c050; }
.split { width: 4px; height: 9px; border: solid #566; border-width: 0 1px; }
.clock { margin-left: auto; color: #fff; line-height: 16px; padding-top: 2px; }
.showdesk { width: 14px; height: 20px; border: 1px solid #ccd; background: #68757e; margin: 0 2px 0 20px; }

/* overlays */
.arrow { position: absolute; left: 902px; top: 372px; }
.redbox { position: absolute; left: 1354px; top: 355px; width: 141px; height: 46px; border: 3px solid #e2443e; }
.ime { position: absolute; right: 4px; bottom: 59px; width: 98px; height: 23px; padding: 0 4px 0 13px; background: #fff; display: flex; align-items: center; justify-content: space-between; box-shadow: 0 0 1px #667; }
.brand { position: absolute; right: 88px; bottom: 22px; width: 340px; height: 160px; padding: 0 0 0 26px; background: #212f54; display: flex; align-items: center; gap: 24px; }
.brandtext { color: #ccd0d6; }
.cn { display: flex; gap: 11px; font: bold 42px/50px "Noto Sans CJK SC", sans-serif; }
.en { font: 200 24px/26px "DejaVu Sans", sans-serif; color: #b4bccb; }
```
